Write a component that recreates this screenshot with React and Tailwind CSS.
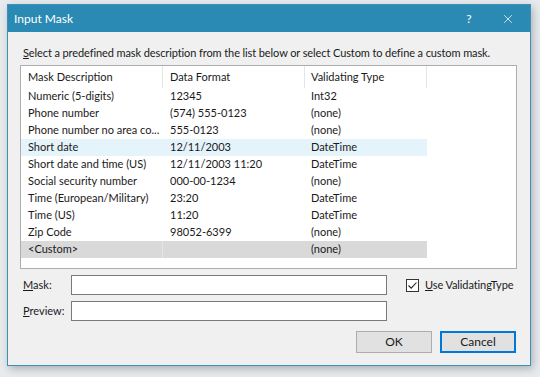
import React from "react";
import { X } from "lucide-react";

const rows = [
  ["Numeric (5-digits)", "12345", "Int32"],
  ["Phone number", "(574) 555-0123", "(none)"],
  ["Phone number no area co...", "555-0123", "(none)"],
  ["Short date", "12/11/2003", "DateTime", "hover"],
  ["Short date and time (US)", "12/11/2003 11:20", "DateTime"],
  ["Social security number", "000-00-1234", "(none)"],
  ["Time (European/Military)", "23:20", "DateTime"],
  ["Time (US)", "11:20", "DateTime"],
  ["Zip Code", "98052-6399", "(none)"],
  ["<Custom>", "", "(none)", "selected"],
];

function Row({ desc, format, type, state }) {
  const bg =
    state === "hover" ? "bg-[#e5f3fb]" : state === "selected" ? "bg-[#d9d9d9]" : "";
  return (
    <div className={`flex h-[17px] items-center w-[406px] whitespace-nowrap ${bg}`}>
      <div className={`w-[142px] pl-[7px] h-full flex items-center overflow-hidden ${state === "selected" ? "border-r border-[#e5e5e5]" : ""}`}>
        {desc}
      </div>
      <div className="w-[142px] pl-[7px] overflow-hidden">{format}</div>
      <div className="w-[122px] pl-[6px] overflow-hidden">{type}</div>
    </div>
  );
}

export default function App() {
  return (
    <div
      className="w-[540px] h-[377px] bg-[#e8ebee] pl-[7px] pt-[4px] text-[11px] text-[#1a1a1a]"
      style={{ fontFamily: 'Lato, "Noto Sans", sans-serif' }}
    >
      <div className="w-[524px] h-[362px] bg-[#f0f0f0] border border-[#3d91b6] shadow-[2px_3px_8px_rgba(0,0,0,0.25)] flex flex-col">
        {/* title bar */}
        <div className="h-[27px] bg-[#2b8ab3] flex items-center text-white">
          <span className="pl-[6px] text-[12px] flex-1">Input Mask</span>
          <span className="w-[20px] text-center text-[12px] mr-[22px]">?</span>
          <X size={14} strokeWidth={1.3} className="mr-[15px]" />
        </div>

        <div className="pl-[15px] pt-[13px] leading-[16px] whitespace-nowrap tracking-[-0.1px]">
          <span className="underline">S</span>elect a predefined mask description from the list below or select Custom to define a custom mask.
        </div>

        {/* list */}
        <div className="ml-[12px] mt-[4px] w-[497px] h-[204px] bg-white border border-[#adadad]">
          <div className="flex h-[22px] items-center w-[406px] whitespace-nowrap">
            <div className="w-[142px] pl-[7px] h-full flex items-center border-r border-[#e5e5e5]">Mask Description</div>
            <div className="w-[142px] pl-[7px] h-full flex items-center border-r border-[#e5e5e5]">Data Format</div>
            <div className="w-[122px] pl-[6px] h-full flex items-center border-r border-[#e5e5e5]">Validating Type</div>
          </div>
          {rows.map((r) => (
            <Row key={r[0]} desc={r[0]} format={r[1]} type={r[2]} state={r[3]} />
          ))}
        </div>

        {/* mask / preview */}
        <div className="flex mt-[6px] items-center whitespace-nowrap">
          <div className="w-[63px] pl-[15px]">
            <span className="underline">M</span>ask:
          </div>
          <div className="w-[316px] h-[20px] bg-white border border-[#7a7a7a]" />
          <div className="ml-[19px] flex items-center gap-[6px]">
            <div className="w-[13px] h-[13px] border border-[#333] bg-white flex items-center justify-center">
              <svg width="11" height="11" viewBox="0 0 11 11">
                <path d="M1.5 5.5 L4.2 8.2 L9.5 2.5" stroke="#222" strokeWidth="1.1" fill="none" />
              </svg>
            </div>
            <span className="tracking-[-0.1px]">
              <span className="underline">U</span>se ValidatingType
            </span>
          </div>
        </div>
        <div className="flex mt-[6px] items-center whitespace-nowrap">
          <div className="w-[63px] pl-[15px]">
            <span className="underline">P</span>review:
          </div>
          <div className="w-[316px] h-[20px] bg-white border border-[#7a7a7a]" />
        </div>

        {/* buttons */}
        <div className="flex justify-end gap-[8px] mt-[10px] pr-[14px]">
          <button className="w-[76px] h-[22px] bg-[#e1e1e1] border border-[#adadad] text-[12px]">OK</button>
          <button className="w-[76px] h-[22px] bg-[#e1e1e1] border-2 border-[#0078d7] text-[12px]">Cancel</button>
        </div>
      </div>
    </div>
  );
}
